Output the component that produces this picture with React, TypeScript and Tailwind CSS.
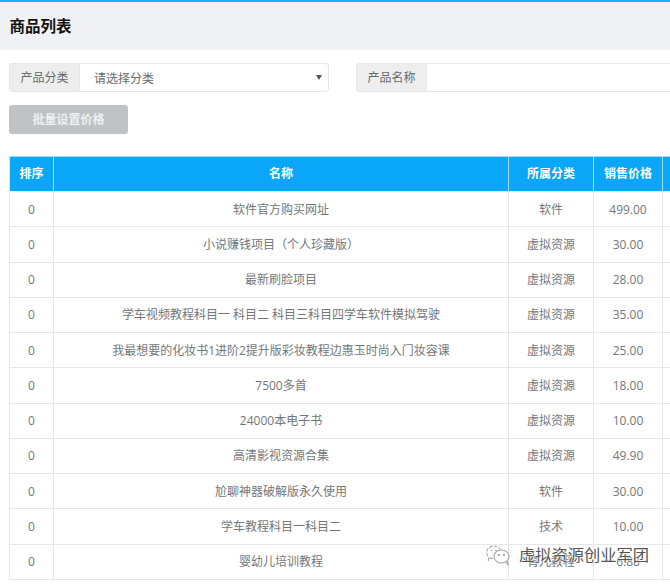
const rows: [string, string, string][] = [
  ["软件官方购买网址", "软件", "499.00"],
  ["小说赚钱项目（个人珍藏版）", "虚拟资源", "30.00"],
  ["最新刷脸项目", "虚拟资源", "28.00"],
  ["学车视频教程科目一 科目二 科目三科目四学车软件模拟驾驶", "虚拟资源", "35.00"],
  ["我最想要的化妆书1进阶2提升版彩妆教程边惠玉时尚入门妆容课", "虚拟资源", "25.00"],
  ["7500多首", "虚拟资源", "18.00"],
  ["24000本电子书", "虚拟资源", "10.00"],
  ["高清影视资源合集", "虚拟资源", "49.90"],
  ["尬聊神器破解版永久使用", "软件", "30.00"],
  ["学车教程科目一科目二", "技术", "10.00"],
  ["婴幼儿培训教程", "育儿教程", "6.88"],
];

export default function App() {
  return (
    <div className="relative h-[584px] w-[670px] overflow-hidden bg-white font-['Open_Sans','Noto_Sans_CJK_SC',sans-serif] text-[12px] text-[#73777a] [text-spacing-trim:space-all]">
      <header className="flex h-[50px] items-center border-t-2 border-[#0cb4ee] bg-[#f0f1f5] pl-[9.5px]">
        <h1 className="translate-y-[0.5px] text-[15.5px] font-bold text-[#111]">商品列表</h1>
      </header>

      <div className="w-[700px] pl-[9px]">
        <div className="mt-[13px] flex h-[29px] items-stretch">
          <div className="flex w-[320px] overflow-hidden rounded-[3px] border border-[#e5e6e7]">
            <span className="flex w-[70px] items-center justify-center border-r border-[#e5e6e7] bg-[#eeeeee] text-[#676a6c]">产品分类</span>
            <span className="flex flex-1 items-center justify-between pl-[14px] pr-[6px]">
              <span className="translate-y-[1px] text-[#676a6c]">请选择分类</span>
              <svg width="6" height="5" viewBox="0 0 6 5"><path d="M0 0h6L3 5z" fill="#555" /></svg>
            </span>
          </div>
          <div className="ml-[27px] flex w-[340px] overflow-hidden rounded-l-[3px] border border-[#e5e6e7]">
            <span className="flex w-[70px] items-center justify-center border-r border-[#e5e6e7] bg-[#eeeeee] text-[#676a6c]">产品名称</span>
          </div>
        </div>

        <button className="mt-[13px] block h-[29px] w-[119px] rounded-[3px] bg-[#bfc3c6] font-bold text-[#eef0f1]">批量设置价格</button>

        <table className="mt-[22px] w-[720px] table-fixed border-collapse border-l border-[#e7e7e7]">
          <colgroup>
            <col className="w-[44px]" />
            <col className="w-[455px]" />
            <col className="w-[85px]" />
            <col className="w-[69px]" />
            <col />
          </colgroup>
          <thead>
            <tr className="h-[35px] bg-[#0aa6f7] font-bold text-white">
              <th className="border-r border-t border-[#a6dcf9] font-bold">排序</th>
              <th className="border-r border-t border-[#a6dcf9] font-bold">名称</th>
              <th className="border-r border-t border-[#a6dcf9] font-bold">所属分类</th>
              <th className="border-r border-t border-[#a6dcf9] font-bold">销售价格</th>
              <th className="border-t border-[#a6dcf9]"></th>
            </tr>
          </thead>
          <tbody>
            {rows.map(([name, cat, price], i) => (
              <tr key={i} className="h-[35.27px] text-center">
                <td className="border border-l-0 border-[#e7e7e7] pt-[1px]">0</td>
                <td className="border border-[#e7e7e7] pt-[1px]">{name}</td>
                <td className="border border-[#e7e7e7] pt-[1px]">{cat}</td>
                <td className="border border-[#e7e7e7] pt-[1px]">{price}</td>
                <td className="border border-[#e7e7e7]"></td>
              </tr>
            ))}
          </tbody>
        </table>
      </div>

      <div className="absolute left-[486px] top-[545px] flex items-center gap-[9px]">
        <svg width="24" height="21" viewBox="0 0 24 21" fill="none" stroke="#a5a5a5" strokeWidth="1.1">
          <path d="M7 13.500c-.8 0-1.500-.1-2.200-.4L2.500 15l.5-2.800C1.500 11 .7 9 .7 7.500.7 4 4 1 8 1c2.800 0 5.200 1.400 6.500 3.500" fill="#fff" strokeDasharray="3.500 1.300" />
          <ellipse cx="15.500" cy="11.500" rx="7.500" ry="6.500" fill="#fff" />
          <path d="M20 17l2 3-.3-4" fill="#fff" />
          <circle cx="5.500" cy="5.500" r=".8" fill="#a5a5a5" stroke="none" />
          <circle cx="10" cy="5.500" r=".8" fill="#a5a5a5" stroke="none" />
          <circle cx="13" cy="10" r=".9" fill="#888" stroke="none" />
          <circle cx="18" cy="10" r=".9" fill="#888" stroke="none" />
        </svg>
        <span className="text-[16.25px] leading-none text-[#555] [text-shadow:0_0_2px_#fff,0_0_2px_#fff]">虚拟资源创业军团</span>
      </div>
    </div>
  );
}
